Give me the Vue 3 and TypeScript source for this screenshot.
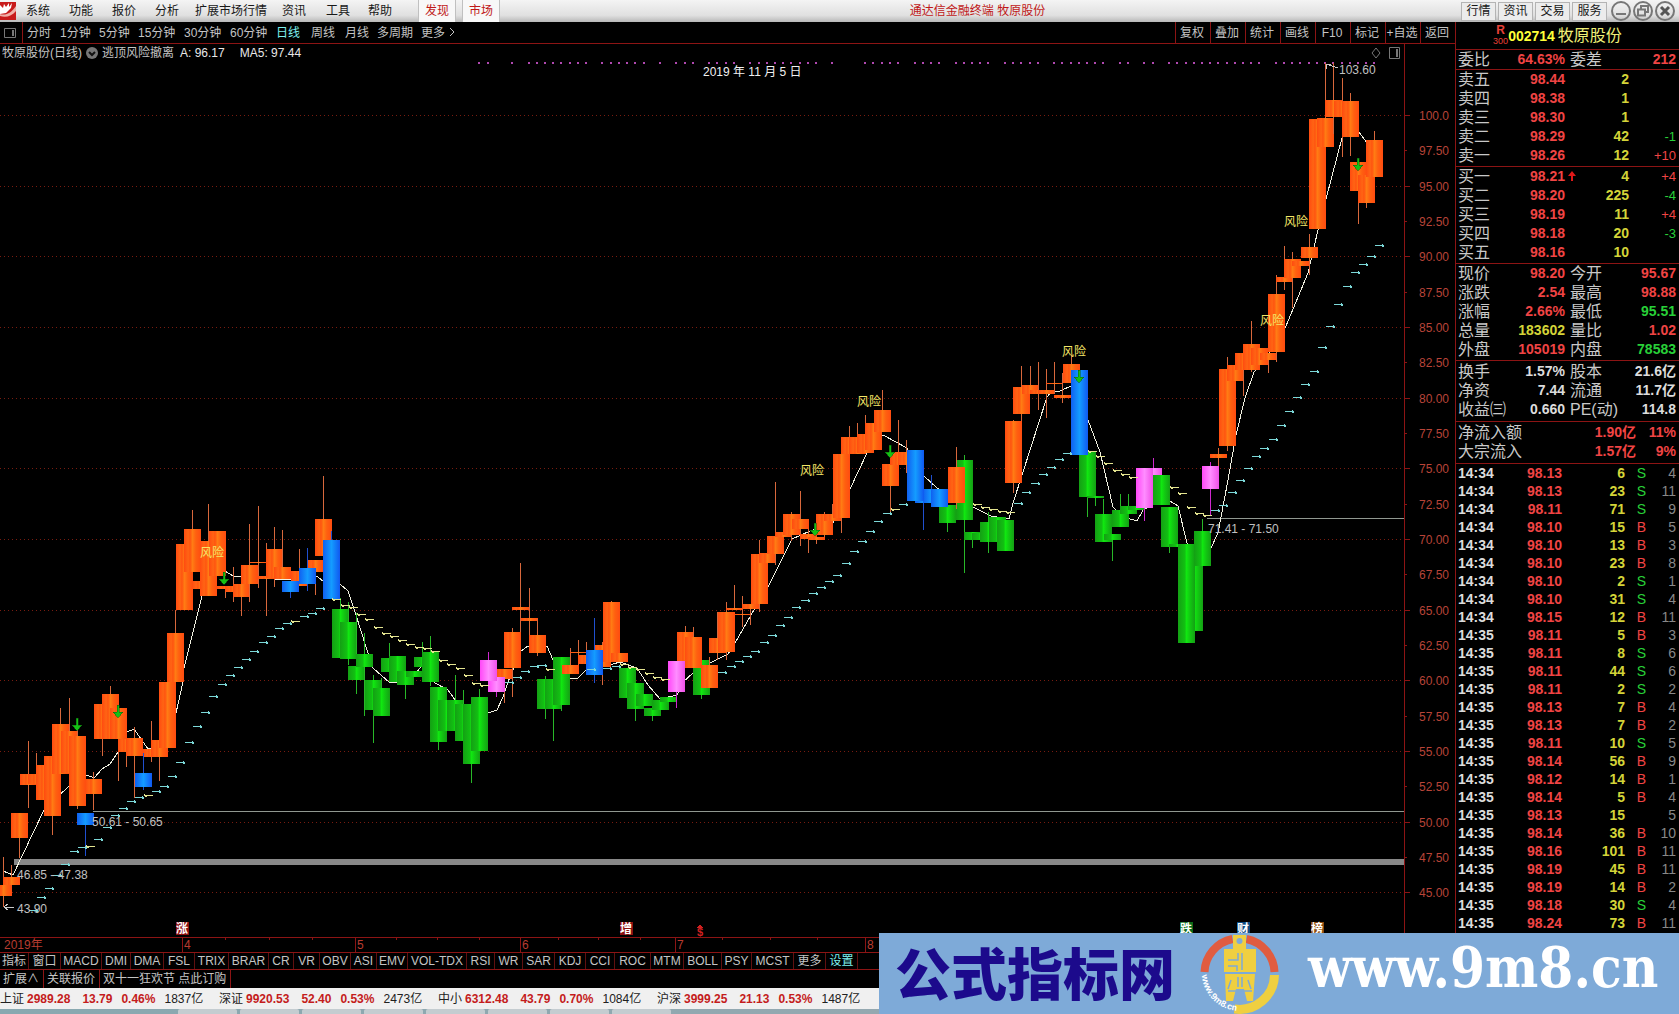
<script setup lang="ts">
type Candle = [index: number, top: number, bottom: number, high?: number, low?: number]
type Kind = 'green' | 'orange' | 'magenta' | 'blue'

const menus = ['系统', '功能', '报价', '分析', '扩展市场行情', '资讯', '工具', '帮助']
const tabs = ['发现', '市场']
const shortcuts = ['行情', '资讯', '交易', '服务']
const periods = ['分时', '1分钟', '5分钟', '15分钟', '30分钟', '60分钟', '日线', '周线', '月线', '多周期', '更多']
const tools = ['复权', '叠加', '统计', '画线', 'F10', '标记', '+自选', '返回']
const indicators = ['指标', '窗口', 'MACD', 'DMI', 'DMA', 'FSL', 'TRIX', 'BRAR', 'CR', 'VR', 'OBV', 'ASI', 'EMV', 'VOL-TDX', 'RSI', 'WR', 'SAR', 'KDJ', 'CCI', 'ROC', 'MTM', 'BOLL', 'PSY', 'MCST', '更多', '设置']
const markets = [
  ['上证', '2989.28', '13.79', '0.46%', '1837亿'],
  ['深证', '9920.53', '52.40', '0.53%', '2473亿'],
  ['中小', '6312.48', '43.79', '0.70%', '1084亿'],
  ['沪深', '3999.25', '21.13', '0.53%', '1487亿'],
]

const asks = [
  ['卖五', '98.44', '2', ''], ['卖四', '98.38', '1', ''], ['卖三', '98.30', '1', ''],
  ['卖二', '98.29', '42', '-1'], ['卖一', '98.26', '12', '+10'],
]
const bids = [
  ['买一', '98.21', '4', '+4'], ['买二', '98.20', '225', '-4'], ['买三', '98.19', '11', '+4'],
  ['买四', '98.18', '20', '-3'], ['买五', '98.16', '10', ''],
]
const book = [asks, bids]
const details = [
  [['委比', '64.63%', 'red', '委差', '212', 'red']],
  [
    ['现价', '98.20', 'red', '今开', '95.67', 'red'], ['涨跌', '2.54', 'red', '最高', '98.88', 'red'],
    ['涨幅', '2.66%', 'red', '最低', '95.51', 'green'], ['总量', '183602', 'yellow', '量比', '1.02', 'red'],
    ['外盘', '105019', 'red', '内盘', '78583', 'green'],
  ],
  [
    ['换手', '1.57%', 'white', '股本', '21.6亿', 'white'], ['净资', '7.44', 'white', '流通', '11.7亿', 'white'],
    ['收益㈢', '0.660', 'white', 'PE(动)', '114.8', 'white'],
  ],
]
const flows = [['净流入额', '1.90亿', '11%'], ['大宗流入', '1.57亿', '9%']]
const trades = [
  '13 6 S 4', '13 23 S 11', '11 71 S 9', '10 15 B 5', '10 13 B 3', '10 23 B 8', '10 2 S 1', '10 31 S 4', '15 12 B 11',
  '11 5 B 3', '11 8 S 6', '11 44 S 6', '11 2 S 2', '13 7 B 4', '13 7 B 2', '11 10 S 5', '14 56 B 9', '12 14 B 1',
  '14 5 B 4', '13 15 - 5', '14 36 B 10', '16 101 B 11', '19 45 B 11', '19 14 B 2', '18 30 S 4', '24 73 B 11',
].map((line, i) => {
  const [cents, qty, side, count] = line.split(' ')
  return { time: i < 9 ? '14:34' : '14:35', price: '98.' + cents, qty, side: side === '-' ? '' : side, count }
})

const STEP = 8.212
const cx = (i: number) => Math.round(3 + i * STEP)

const layers: { kind: Kind; items: Candle[] }[] = [
  { kind: 'green', items: [
    [41, 609, 658, 598], [42, 622, 659, 602, 665], [43, 666, 680, 613, 694], [44, 654, 667, 633, 716], [45, 680, 710, 675, 743],
    [46, 688, 716, 678], [47, 658, 672, 643], [48, 656, 682], [49, 671, 685, 671, 699], [50, 671, 677], [51, 657, 667, 642],
    [52, 652, 682, 636, 686], [53, 687, 742, 687, 750], [54, 700, 731], [55, 700, 731, 675], [56, 704, 741, 690], [57, 704, 764, 704, 783],
    [58, 697, 751, 689], [66, 679, 709, 676, 719], [67, 679, 709, 679, 741], [68, 657, 705, 657, 711], [76, 668, 698], [77, 683, 709, 683, 721],
    [78, 694, 706], [79, 708, 716, 708, 721], [80, 700, 710], [81, 697, 702], [85, 660, 695, 660, 699], [115, 505, 523, 505, 532],
    [117, 460, 520, 455, 573], [118, 532, 540, 532, 548], [119, 533, 540], [120, 522, 542, 512, 553], [121, 517, 542], [122, 520, 551],
    [132, 451, 497, 451, 517], [133, 496, 498, 496, 506], [134, 514, 542, 499], [135, 534, 540, 534, 561], [136, 510, 527, 494],
    [137, 506, 514, 494], [138, 506, 510], [142, 507, 547, 507, 553], [143, 544, 547], [145, 547, 631], [144, 544, 643], [146, 531, 566, 519],
  ] },
  { kind: 'orange', items: [
    [0, 885, 896, 857, 907], [1, 877, 885, 865], [2, 813, 838, 813, 858], [3, 774, 785, 741, 808], [4, 774, 784, 753], [5, 765, 800],
    [6, 756, 816, 756, 835], [7, 724, 774, 708], [8, 731, 773, 698, 785], [9, 736, 806, 724, 809], [11, 779, 794, 772, 810],
    [12, 704, 739, 704, 756], [13, 694, 739, 686], [14, 708, 739, 708, 781], [15, 739, 752, 739, 767], [16, 738, 756, 727, 798],
    [18, 749, 757, 721, 762], [19, 740, 757, 740, 781], [20, 682, 748], [21, 633, 682, 610], [22, 544, 610], [23, 529, 572, 510],
    [24, 581, 589], [25, 541, 596, 504], [26, 531, 576], [27, 586, 589, 586, 598], [28, 586, 592, 567, 602], [29, 584, 597, 584, 616],
    [30, 565, 584, 524, 602], [31, 562, 563, 506, 588], [32, 576, 579, 543, 616], [33, 549, 578, 527, 587], [34, 567, 579, 530],
    [36, 571, 586, 549], [38, 560, 572, 560, 595], [39, 519, 556, 476], [61, 669, 679, 669, 703], [62, 632, 668, 628, 697],
    [63, 607, 610, 563, 632], [64, 618, 621, 588, 635], [65, 635, 653, 619, 656], [69, 665, 674, 648], [70, 652, 653, 640, 665],
    [71, 655, 664, 642], [73, 645, 667, 642, 685], [74, 602, 662, 601], [75, 653, 662], [83, 632, 668, 626], [84, 637, 668, 627],
    [86, 665, 688, 657], [87, 638, 653, 612, 660], [88, 612, 652, 602, 660], [89, 608, 610, 585], [90, 614, 615, 596, 627],
    [91, 604, 609, 604, 625], [92, 554, 604, 540, 612], [93, 553, 563], [94, 536, 554, 482, 565], [95, 532, 537], [96, 514, 535, 512, 541],
    [97, 519, 529, 491, 546], [98, 534, 539, 529, 553], [99, 537, 540, 537, 544], [100, 514, 535, 512, 537], [101, 514, 521, 504],
    [102, 454, 518, 454, 533], [103, 437, 454, 426], [104, 437, 454, 423], [105, 434, 453, 415], [106, 423, 450], [107, 410, 432, 390],
    [108, 464, 486, 464, 515], [109, 452, 465, 420], [110, 452, 465, 440, 473], [116, 467, 503, 447, 509], [123, 421, 483, 420, 493],
    [124, 387, 414, 366, 421], [125, 385, 394, 366], [126, 390, 394, 362, 410], [127, 390, 394, 369, 418], [128, 383, 384, 362, 394],
    [129, 395, 398, 373, 403], [130, 364, 383, 355], [148, 454, 458, 448, 478], [149, 369, 446, 357, 451], [150, 365, 381, 353],
    [151, 353, 370, 346, 396], [152, 344, 370, 321, 372], [153, 348, 365], [154, 353, 360, 353, 373], [155, 294, 352, 275, 362],
    [156, 277, 282, 246, 290], [157, 259, 278, 252, 308], [158, 261, 266], [159, 247, 258, 234, 275], [160, 119, 229],
    [161, 118, 147, 63], [162, 100, 117, 63, 134], [163, 101, 117, 78, 157], [164, 101, 137, 93, 156], [165, 162, 191, 158, 224],
    [166, 175, 203, 175, 208], [167, 140, 177, 131],
  ] },
  { kind: 'magenta', items: [
    [60, 677, 692, 677, 697], [59, 660, 681, 652], [82, 661, 692, 661, 708], [140, 468, 505, 458], [139, 468, 508, 468, 521], [147, 466, 489, 462, 516],
  ] },
  { kind: 'green', items: [[141, 475, 505]] },
  { kind: 'blue', items: [
    [10, 813, 825, 813, 856], [17, 773, 787, 753, 790], [35, 581, 592, 581, 598], [37, 568, 584, 548, 591], [40, 540, 599, 531], [72, 650, 675, 618, 683],
    [112, 491, 503, 491, 530], [113, 489, 503, 475], [114, 489, 507], [111, 450, 501], [131, 370, 455],
  ] },
]

const wickColor: Record<Kind, string> = { green: '#28b828', orange: '#d8683c', magenta: '#d028d0', blue: '#2050d0' }

const risingStops: [number, number[]][] = [
  [3, [910, 897, 888, 875, 864, 851, 847]], [11, [839, 827, 815, 808, 801, 797]], [18, [791, 786, 776, 762, 742, 726, 712, 696, 684, 675, 667, 659, 651, 642, 636, 628, 623]],
  [36, [616, 613, 608]], [61, [682, 677, 671, 666, 665]], [71, [669]], [73, [668, 666]],
  [87, [672, 666, 661, 656, 651, 642, 635, 625, 617, 607, 600, 593, 587, 581, 575, 563, 551, 541, 531, 521, 513]], [109, [504]],
  [123, [503, 492, 483, 474, 467, 459, 453]],
  [147, [510, 505, 492, 480, 468, 456, 448, 439, 425, 411, 397, 384, 371, 347, 326, 304, 286, 272, 264, 256, 245]],
]
const fallingStops: [number, number[]][] = [
  [10, [846]], [17, [795]], [35, [621]], [40, [599, 605, 607, 614, 619, 627, 633, 636, 640, 644, 647, 648, 651, 660, 664, 668, 675, 683, 685]],
  [66, [669]], [75, [664, 667, 669, 673, 677, 679]], [108, [509]], [118, [504, 507, 509, 511, 512]],
  [132, [451, 456, 463, 470, 474, 477]], [142, [487, 493, 507, 513, 515]],
]
const flatten = (runs: [number, number[]][]) => runs.flatMap(([start, ys]) => ys.map((y, k) => ({ x: cx(start + k) + 1, y })))
const risePath = flatten(risingStops).map(p => `M${p.x} ${p.y}.5h9M${p.x + 7} ${p.y - 1}.5h1M${p.x + 7} ${p.y + 1}.5h2`).join('')
const fallPath = flatten(fallingStops).map(p => `M${p.x} ${p.y}.5h9M${p.x} ${p.y - 1}.5h1M${p.x + 1} ${p.y + 1}.5h2`).join('')

const average = '3,871 13,875 44,810 70,785 87,775 94,778 102,769 110,764 118,752 127,732 134,729 148,749 165,745 176,713 183,682 184,668 202,596 215,565 225,571 233,576 241,577 290,580 317,576 325,583 340,584 348,591 355,612 368,653 373,668 390,683 410,680 431,655 435,683 448,690 458,704 483,714 488,713 497,710 503,697 508,682 520,652 528,646 547,646 553,660 570,679 578,678 586,670 603,667 620,662 637,668 648,685 660,699 677,695 683,682 693,673 710,663 728,654 735,643 755,608 767,589 792,539 810,531 833,523 850,489 867,453 883,435 907,448 924,476 937,488 973,507 991,516 1009,519 1013,503 1023,472 1047,397 1052,391 1060,391 1071,386 1088,420 1100,452 1113,507 1116,510 1127,518 1137,521 1143,510 1162,500 1170,501 1178,506 1187,543 1195,560 1211,548 1218,533 1228,480 1236,435 1245,398 1254,372 1270,352 1286,326 1308,273 1318,230 1326,199 1342,138 1350,128 1359,132 1367,143 1373,155'

const dotRuns = [[58, 59], [62, 62], [64, 71], [73, 78], [80, 80], [82, 84], [86, 89], [91, 99], [101, 101], [105, 109], [111, 114], [116, 120], [122, 126], [128, 134], [136, 137], [139, 140], [142, 153], [155, 167]]
const dots = dotRuns.flatMap(([a, b]) => Array.from({ length: b - a + 1 }, (_, k) => cx(a + k)))

const prices = Array.from({ length: 23 }, (_, k) => {
  const v = 100 - k * 2.5
  return { y: Math.round(115 + (100 - v) * 14.13), text: k === 0 ? '100.0' : v.toFixed(2), major: k % 2 === 0 }
})
const risks = [[200, 557], [800, 475], [857, 406], [1062, 356], [1260, 325], [1284, 226]]
const arrows = [[77, 719], [118, 706], [224, 573], [890, 446], [815, 524], [1079, 371], [1358, 159]]
const months: [number, string][] = [[182, '4'], [355, '5'], [520, '6'], [675, '7'], [865, '8']]
const minors = [225, 269, 312, 396, 437, 479, 558, 598, 640, 722, 770, 817]
const badges: [number, string, string][] = [[176, '涨', '#8c1010'], [620, '增', '#8c1010'], [1180, '跌', '#0c6a18'], [1237, '财', '#0c4a80'], [1311, '榜', '#8a4a10']]
</script>

<template>
  <div class="terminal">
    <header class="menubar">
      <svg class="brand" viewBox="0 0 16 18"><rect width="16" height="18" fill="#c81c1c" /><path d="M0 3v9l6-1 5-5 1-5-3 4V1L6 5 4 2l-1 4z" fill="#fff" /><path d="M0 12c6 2 11-1 16-8v5c-4 5-10 7-16 5z" fill="#f0b0a8" /></svg>
      <nav class="menus"><button v-for="m in menus" :key="m">{{ m }}</button></nav>
      <nav class="tabs"><button v-for="t in tabs" :key="t">{{ t }}</button></nav>
      <div class="title">通达信金融终端 牧原股份</div>
      <nav class="shortcuts"><button v-for="s in shortcuts" :key="s">{{ s }}</button></nav>
      <div class="window-keys">
        <button aria-label="最小化"><svg viewBox="0 0 20 20"><circle cx="10" cy="10" r="9" /><path d="M5 13h10" /></svg></button>
        <button aria-label="还原"><svg viewBox="0 0 20 20"><circle cx="10" cy="10" r="9" /><path d="M8 8V5h7v6h-3M5 8.500h7v6H5z" /></svg></button>
        <button aria-label="关闭"><svg viewBox="0 0 20 20"><circle cx="10" cy="10" r="9" /><path class="cross" d="m6 6 8 8m0-8-8 8" /></svg></button>
      </div>
    </header>

    <main class="body">
      <section class="left">
        <div class="toolbar">
          <svg class="pane" viewBox="0 0 12 12"><path d="M.5 1.500h11v9H.5z" /><path class="fill" d="M8 3h2v6H8z" /></svg>
          <nav class="periods"><button v-for="p in periods" :key="p" :class="{ active: p === '日线' }">{{ p }}<svg v-if="p === '更多'" viewBox="0 0 6 10"><path d="m1 1 4 4-4 4" /></svg></button></nav>
          <nav class="tools"><button v-for="t in tools" :key="t">{{ t }}</button></nav>
        </div>
        <div class="legend">
          <span>牧原股份(日线)</span>
          <svg class="chev" viewBox="0 0 12 12"><circle cx="6" cy="6" r="6" fill="#777" /><path d="m3 5 3 3 3-3" fill="none" stroke="#111" stroke-width="2" /></svg>
          <span>逃顶风险撤离</span>
          <span class="val">A: 96.17</span>
          <span class="val second">MA5: 97.44</span>
          <div class="legend-icons">
            <svg viewBox="0 0 10 12"><path d="m5 1 4 5-4 5-4-5z" /></svg>
            <svg viewBox="0 0 12 12"><path d="M.5 .5h10v11H.5z" /><path class="fill" d="M7 2h2v8H7z" /></svg>
          </div>
          <div class="legend-end"></div>
        </div>

        <svg class="chart" viewBox="0 62 1455 891" shape-rendering="crispEdges">
          <defs>
            <linearGradient id="g-orange"><stop offset="0" stop-color="#ff4c10" /><stop offset=".25" stop-color="#ff6414" /><stop offset=".35" stop-color="#ff5410" /><stop offset=".5" stop-color="#ff7c14" /><stop offset=".7" stop-color="#ff6010" /><stop offset="1" stop-color="#ff4c10" /></linearGradient>
            <linearGradient id="g-green"><stop offset="0" stop-color="#14a014" /><stop offset=".4" stop-color="#12c012" /><stop offset=".5" stop-color="#10e810" /><stop offset=".7" stop-color="#12c812" /><stop offset="1" stop-color="#14a014" /></linearGradient>
            <linearGradient id="g-magenta"><stop offset="0" stop-color="#ff48f8" /><stop offset=".5" stop-color="#ff8cff" /><stop offset="1" stop-color="#f050e8" /></linearGradient>
            <linearGradient id="g-blue"><stop offset="0" stop-color="#1060f0" /><stop offset=".5" stop-color="#149cff" /><stop offset="1" stop-color="#1058f0" /></linearGradient>
          </defs>

          <g v-for="p in prices" :key="p.text">
            <line v-if="p.major" class="grid" x1="0" x2="1404" :y1="p.y + .5" :y2="p.y + .5" />
            <line class="axis" x1="1404" :x2="p.major ? 1410 : 1407" :y1="p.y + .5" :y2="p.y + .5" />
            <text class="price" x="1449" :y="p.y + 5">{{ p.text }}</text>
          </g>
          <path class="axis" d="M1404.500 62V937M0 937.500H1455M0 952.500H1455" />
          <rect v-for="x in dots" :key="x" :x="x - 1" y="62" width="2" height="2" fill="#b048b0" />

          <path d="M93 811.500H1404M1207 518.500H1404" stroke="#909890" />
          <rect x="14" y="859" width="1390" height="6" fill="#888" />
          <polyline class="average" :points="average" />

          <g v-for="(layer, n) in layers" :key="n">
            <g v-for="c in layer.items" :key="c[0]">
              <line :x1="cx(c[0]) + .5" :x2="cx(c[0]) + .5" :y1="c[3] ?? c[1]" :y2="c[4] ?? c[2]" :stroke="wickColor[layer.kind]" />
              <rect :x="cx(c[0]) - 8" :y="c[1]" width="17" :height="c[2] - c[1]" :fill="`url(#g-${layer.kind})`" />
            </g>
          </g>
          <path :d="risePath" fill="none" stroke="#7cd8d8" />
          <path :d="fallPath" fill="none" stroke="#e4e490" />
          <path v-for="a in arrows" :key="a[0]" :transform="`translate(${a[0]} ${a[1]})`" d="M-1-1h2V6h4l-5 6-5-6h4z" fill="#14c014" stroke="#0a5a0a" stroke-width=".5" />

          <path d="M4 907h10M4 907l4-3m-4 3 4 3M1326 64l12 4M1326 64h5m-5 0v5" stroke="#c8c8c8" fill="none" />
          <g class="notes">
            <text x="17" y="879">46.85 - 47.38</text>
            <text x="17" y="913">43.90</text>
            <text x="92" y="826">50.61 - 50.65</text>
            <text x="1208" y="533">71.41 - 71.50</text>
            <text x="1339" y="74">103.60</text>
          </g>
          <text class="caption" x="703" y="76">2019 年 11 月 5 日</text>
          <text v-for="r in risks" :key="r[0]" class="risk" :x="r[0]" :y="r[1]">风险</text>

          <g v-for="b in badges" :key="b[1]">
            <rect :x="b[0]" y="922" width="13" height="13" :fill="b[2]" />
            <text class="badge" :x="b[0]" y="933">{{ b[1] }}</text>
          </g>
          <path d="m697 928 3-4 3 4z" fill="#d02020" /><text class="dollar" x="697" y="936">$</text>
          <text class="date" x="4" y="949">2019年</text>
          <g v-for="m in months" :key="m[1]">
            <path class="axis" :d="`M${m[0]}.5 937v15`" /><text class="date" :x="m[0] + 2" y="949">{{ m[1] }}</text>
          </g>
          <path v-for="x in minors" :key="x" class="axis" :d="`M${x}.5 937v3`" />
        </svg>

        <nav class="indicators"><button v-for="(n, i) in indicators" :key="n + i" :class="{ active: n === '设置' }">{{ n }}</button></nav>
        <nav class="extras"><button>扩展∧</button><button>关联报价</button><a href="#">双十一狂欢节 点此订购</a></nav>
      </section>

      <aside class="quote">
        <h1><span class="tag"><b>R</b><i>300</i></span><b class="code">002714</b><span>牧原股份</span></h1>
        <template v-for="(rows, n) in details" :key="n">
          <table class="pairs" :class="`rows-${rows.length}`">
            <tbody>
              <tr v-for="r in rows" :key="r[0]">
                <th scope="row">{{ r[0] }}</th><td :class="r[2]">{{ r[1] }}</td><th scope="row" class="next">{{ r[3] }}</th><td :class="r[5]">{{ r[4] }}</td>
              </tr>
            </tbody>
          </table>
          <template v-if="n === 0">
            <table v-for="(side, k) in book" :key="k" class="book">
              <tbody>
                <tr v-for="r in side" :key="r[0]">
                  <th scope="row">{{ r[0] }}</th><td class="red">{{ r[1] }}</td>
                  <td class="up"><svg v-if="r[0] === '买一'" viewBox="0 0 8 10"><path d="M4 0 8 5H5v5H3V5H0z" fill="#e01818" /></svg></td>
                  <td class="yellow">{{ r[2] }}</td><td class="delta" :class="r[3].startsWith('-') ? 'green' : 'red'">{{ r[3] }}</td>
                </tr>
              </tbody>
            </table>
          </template>
        </template>
        <table class="flows">
          <tbody><tr v-for="f in flows" :key="f[0]"><th scope="row">{{ f[0] }}</th><td class="red">{{ f[1] }}</td><td class="red">{{ f[2] }}</td></tr></tbody>
        </table>
        <table class="trades">
          <tbody>
            <tr v-for="(t, i) in trades" :key="i">
              <td class="white">{{ t.time }}</td><td class="red">{{ t.price }}</td><td class="yellow">{{ t.qty }}</td>
              <td class="side" :class="t.side === 'S' ? 'green' : 'red'">{{ t.side }}</td><td class="count">{{ t.count }}</td>
            </tr>
          </tbody>
        </table>
      </aside>
    </main>

    <footer>
      <div class="ticker">
        <div v-for="m in markets" :key="m[0]" class="market"><span>{{ m[0] }}</span><b>{{ m[1] }}</b><b class="num">{{ m[2] }}</b><b class="num">{{ m[3] }}</b><span class="num">{{ m[4] }}</span></div>
      </div>
      <div class="taskbar"><i v-for="n in 8" :key="n"></i></div>
    </footer>

    <div class="banner">
      <span class="site-name">公式指标网</span>
      <svg class="emblem" viewBox="1198 933 84 81">
        <path d="M1204.500 972a35 35 0 0 1 28-33M1246.500 939a35 35 0 0 1 28 33" fill="none" stroke="#e05c40" stroke-width="8" />
        <path d="M1274.500 975a35 35 0 0 1-40 34" fill="none" stroke="#efcf40" stroke-width="9" />
        <path d="M1233 935h13v14h10v23h-32v-23h9zM1225 974h30l-2 27h-6l-3-12h-8l-3 12h-7z" fill="#efcf40" />
        <circle cx="1239.500" cy="941" r="3" fill="#7eaad8" />
        <path d="M1228 960h10v-7M1242 953v17M1228 966h9v5M1226 973h28M1231 980l-3 9M1238 977v10M1242 977v10M1248 980l3 9M1228 991h24" fill="none" stroke="#7eaad8" stroke-width="1.500" />
        <path id="ring" d="M1202 975a38 38 0 0 0 38 36" fill="none" />
        <text class="ring-text"><textPath href="#ring">www.9m8.cn</textPath></text>
      </svg>
      <span class="site-url">www.9m8.cn</span>
    </div>
  </div>
</template>

<style>
body { margin: 0; background: #000; }
</style>

<style scoped>
.terminal { position: relative; min-height: 100vh; background: #000; color: #c4c4c4; font: 12px/16px "Liberation Sans", "Noto Sans CJK SC", sans-serif; white-space: nowrap; overflow: hidden; }
button { appearance: none; border: 0; margin: 0; padding: 0; background: none; color: inherit; font: inherit; text-align: left; white-space: nowrap; }
a { color: inherit; text-decoration: none; }
nav, .menubar, .toolbar, .legend, .body, .ticker, .market, .banner { display: flex; }

.menubar { height: 22px; align-items: center; background: linear-gradient(#f4f4f4, #e0e0e0 70%, #b8b8b8); color: #181818; }
.brand { width: 16px; height: 18px; margin-right: 10px; }
.menus { display: grid; grid-template-columns: 43px 43px 43px 40px 87px 44px 42px 50px; }
.tabs { gap: 6px; align-self: stretch; }
.tabs button { width: 38px; background: #f8f8f8; border: 1px solid #c0c0c0; border-top: 0; border-bottom: 0; color: #c01818; text-align: center; }
.title { flex: 1; padding-right: 6px; text-align: center; color: #c01818; }
.shortcuts { gap: 2px; }
.shortcuts button { width: 35px; height: 19px; border: 1px solid #b4b4b4; background: #ececec; text-align: center; }
.window-keys { display: flex; gap: 2px; padding: 0 4px 0 4px; }
.window-keys svg { display: block; width: 20px; height: 20px; fill: none; stroke: #777; stroke-width: 2px; }
.window-keys .cross { stroke: #555; stroke-width: 3px; }

.left { flex: 1; min-width: 0; }
.toolbar { height: 21px; align-items: center; border-bottom: 1px solid #8c1414; }
.pane { width: 12px; height: 12px; margin: 0 6px 0 4px; fill: none; stroke: #777; }
.pane .fill, .legend-icons .fill { fill: #777; stroke: none; }
.periods { display: grid; grid-template-columns: 33px 39px 39px 46px 46px 46px 35px 34px 32px 44px 40px; align-items: center; height: 21px; padding-left: 4px; border-left: 1px solid #8c1414; }
.periods .active, .indicators .active { color: #7ef0f0; }
.periods svg { width: 6px; height: 10px; margin-left: 4px; fill: none; stroke: #c4c4c4; }
.tools { margin-left: auto; }
.tools button { width: 35px; height: 21px; box-sizing: border-box; padding-right: 2px; border-left: 1px solid #8c1414; text-align: center; }
.legend { height: 18px; align-items: center; padding-left: 2px; }
.chev { width: 12px; height: 12px; margin: 0 4px; }
.val { margin-left: 6px; color: #e8e8e8; }
.second { margin-left: 15px; }
.legend-icons { display: flex; gap: 7px; margin-left: auto; padding-right: 3px; }
.legend-icons svg { width: 12px; height: 12px; fill: none; stroke: #777; }
.legend-end { align-self: stretch; width: 50px; border-left: 1px solid #8c1414; }

.chart { display: block; width: 100%; height: auto; }
.grid { stroke: #781c10; stroke-dasharray: 1 3; }
.axis { stroke: #8c1414; fill: none; }
.price { fill: #b84438; font-size: 12px; text-anchor: end; }
.average { fill: none; stroke: #f0f0e0; stroke-width: 1px; }
.notes { fill: #c0c0c0; font-size: 12px; }
.caption { fill: #f0f0f0; font-size: 12px; }
.risk { fill: #f4e668; font-size: 12px; }
.badge { fill: #fff; font-size: 12px; font-weight: 700; }
.dollar { fill: #d02020; font-size: 11px; font-weight: 700; }
.date { fill: #b83c30; font-size: 12px; }

.indicators { display: grid; grid-template-columns: 29px 32px 41px 29px 33px 31px 34px 40px 25px 26px 31px 26px 31px 59px 28px 28px 32px 31px 29px 36px 33px 38px 30px 42px 32px 32px; border-bottom: 1px solid #8c1414; }
.indicators button { height: 16px; border-right: 1px solid #601010; text-align: center; }
.extras button, .extras a { height: 18px; line-height: 18px; padding: 0 4px 0 3px; border-right: 1px solid #8c1414; }

.quote { width: 224px; box-sizing: border-box; border-left: 1px solid #8c1414; font-weight: 700; font-size: 14px; }
h1 { display: flex; align-items: center; justify-content: center; height: 27px; margin: 0; padding-right: 20px; border-bottom: 1px solid #8c1414; color: #f0f078; font-size: 16px; font-weight: 400; line-height: 24px; }
.tag { display: grid; color: #e84038; font-size: 12px; line-height: 11px; text-align: center; }
.tag i { font-size: 9px; font-style: normal; }
.code { margin-right: 3px; color: #ffff38; font-size: 14px; }
table { width: 100%; table-layout: fixed; border-collapse: separate; border-spacing: 0; }
th, td { height: 19px; padding: 0; line-height: 19px; text-align: right; }
th { color: #c8c8c8; font-size: 16px; font-weight: 400; text-align: left; padding-left: 2px; }
.pairs, .book, .flows { border-bottom: 1px solid #8c1414; }
.book, .rows-5 { padding: 0 0 1px; }
.rows-3 { padding: 1px 0 2px; }
.book tr > :nth-child(1), .pairs tr > :nth-child(1) { width: 50px; }
.book tr > :nth-child(2), .pairs tr > :nth-child(2) { width: 57px; }
.book tr > :nth-child(3) { width: 14px; }
.book tr > :nth-child(4) { width: 50px; }
.book tr > :last-child, .pairs tr > :last-child, .flows tr > :last-child, .trades tr > :last-child { padding-right: 3px; }
.pairs .next { width: 46px; padding-left: 5px; }
.up { text-align: center; }
.up svg { width: 8px; height: 10px; }
.delta { font-size: 13px; font-weight: 400; }
.flows { padding: 1px 0 2px; }
.flows tr > :nth-child(1) { width: 90px; }
.flows tr > :nth-child(2) { width: 88px; }
.trades td { height: 18px; line-height: 18px; }
.trades tr > :nth-child(1) { width: 50px; text-align: left; padding-left: 2px; }
.trades tr > :nth-child(2) { width: 54px; }
.trades tr > :nth-child(3) { width: 63px; }
.trades .side { width: 21px; font-weight: 400; }
.trades .count { color: #888; font-weight: 400; }
.red { color: #f04444; }
.green { color: #28d038; }
.yellow { color: #d4d438; }
.white { color: #dcdcdc; }

.ticker { height: 21px; align-items: center; background: #f0f0f0; color: #202020; }
.market { width: 219px; }
.market > :first-child { width: 27px; }
.market b { color: #c41c1c; }
.market .num { padding-left: 9px; }
.market b:nth-child(3) { padding-left: 12px; }
.taskbar { display: flex; gap: 3px; height: 5px; padding-left: 178px; background: linear-gradient(90deg, #88a8b0, #98a8b0 70%, #7a6870); }
.taskbar i { width: 59px; background: #c4ccd0; border-radius: 2px 2px 0 0; }

.banner { position: absolute; right: 0; bottom: 0; width: 800px; height: 81px; align-items: center; background: #7eaad8; }
.site-name { margin-left: 16px; padding-bottom: 6px; color: #1c0a8c; font: 900 56px/70px "Noto Sans CJK SC", sans-serif; }
.emblem { width: 84px; height: 81px; margin-left: 23px; }
.ring-text { fill: #fff; font-size: 9px; font-weight: 700; }
.site-url { margin-left: 26px; padding-bottom: 14px; color: #fff; font: 700 56px/66px "DejaVu Serif Condensed", "DejaVu Serif", serif; }
</style>
